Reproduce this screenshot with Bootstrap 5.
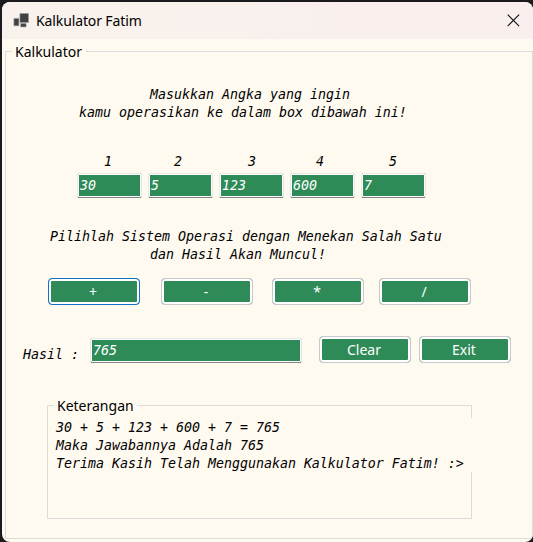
<!DOCTYPE html>
<html lang="id">
<head>
<meta charset="utf-8">
<title>Kalkulator Fatim</title>
<meta name="viewport" content="width=device-width, initial-scale=1">
<link href="https://cdn.jsdelivr.net/npm/bootstrap@5.3.0/dist/css/bootstrap.min.css" rel="stylesheet">
<style>
  body { background: #1b1a1c; height: 542px; overflow: hidden; color: #000; font: 14.3px/20px "Noto Sans", "Open Sans", sans-serif; }
  .app-window { margin: 2px 0 0 2px; width: 531px; height: 540px; background: #fffaf0; border-radius: 8px; overflow: hidden; }
  .titlebar { height: 37px; background: linear-gradient(90deg, #f9f2ec, #f9efee); padding: 0 13px 0 11px; }
  .titlebar span { margin-left: 6px; font-size: 14px; letter-spacing: -.12px; }
  .group { border: 1px solid #dcdcdc; min-width: 0; }
  .group > legend { float: none; width: auto; height: 20px; margin: 0; font: 14px/22px "Noto Sans", "Open Sans", sans-serif; letter-spacing: 0; white-space: nowrap; }
  .group-main { margin: 2px 0 0 3px; width: 528px; height: 498px; }
  .group-main > legend { margin-left: 6px; padding: 0 3px; width: 74px; }
  .mono { font: italic 13.29px/18px "DejaVu Sans Mono", "Liberation Mono", monospace; white-space: pre; }
  .prompt-a { margin: 25px 0 0 73px; }
  .prompt-a .first { padding-left: 71px; }
  .prompt-b { margin: 30px 0 0 44px; }
  .prompt-b .second { padding-left: 100px; }
  .fields { margin: 31px 0 0 71px; gap: 6px; }
  .field { width: 65px; }
  .field label { display: block; height: 20px; padding-left: 27px; }
  .field:nth-child(2) label { padding-left: 26px; }
  .field:nth-child(3) label { padding-left: 29px; }
  .field:nth-child(4) label { padding-left: 26px; }
  .field:nth-child(5) label { padding-left: 28px; }
  .entry.form-control { height: 25px; min-height: 0; padding: 0 0 1px 2px; border: 1px solid #e9e8e6; border-bottom-color: #858182; border-radius: 2px; background: #2e8b57; color: #fff; font: italic 13.29px/18px "DejaVu Sans Mono", monospace; box-shadow: inset 0 0 0 1px #fff; }
  .calc-btn.btn { width: 92px; height: 27px; padding: 0 2px 0 0; border: 1px solid #c9cacc; border-radius: 4px; background: #2e8b57; box-shadow: inset 0 0 0 2px #fff; color: #fff; font-size: 14px; line-height: 26px; letter-spacing: 0; }
  .calc-btn.focused { border-color: #1271c9; }
  .operators { margin: 14px 0 0 42px; }
  .operators .calc-btn:nth-child(2) { margin-left: 21px; }
  .operators .calc-btn:nth-child(3) { margin-left: 19px; }
  .operators .calc-btn:nth-child(4) { margin-left: 15px; }
  .result { margin: 31px 0 0 17px; height: 27px; }
  .result label { width: 67px; padding-top: 10px; }
  .result .entry { width: 212px; margin-top: 2px; }
  .result .clear { margin-left: 17px; }
  .result .exit { margin-left: 8px; }
  .group-note { margin: 32px 0 0 41px; width: 425px; height: 124px; }
  .group-note > legend { margin-left: 6px; padding: 0 3px; width: 83px; }
  .note { margin: 3px -1px 0 6px; padding: 1px 0 0 2px; height: 54px; background: #fffaf0; }
</style>
</head>
<body>
<main class="app-window">
  <header class="titlebar d-flex align-items-center">
    <svg width="17" height="15" viewBox="0 0 17 15"><g fill="#404143" stroke="#9c9a99" stroke-width=".6"><path d="M.9 5.4h5v7.4h-5zM6.9.5h8.6v9H6.9zM7.7 10.6h5.4v3.3H7.7z"/></g></svg>
    <span>Kalkulator Fatim</span>
    <svg class="ms-auto" width="13" height="13" viewBox="0 0 13 13"><path d="M.7.7l11.4 11.4M12.1.7L.7 12.1" stroke="#111" stroke-width="1.15"/></svg>
  </header>
  <fieldset class="group group-main">
    <legend>Kalkulator</legend>
    <div class="mono prompt-a"><div class="first">Masukkan Angka yang ingin</div><div>kamu operasikan ke dalam box dibawah ini!</div></div>
    <div class="fields d-flex">
      <div class="field"><label class="mono" for="n1">1</label><input id="n1" class="form-control entry" value="30"></div>
      <div class="field"><label class="mono" for="n2">2</label><input id="n2" class="form-control entry" value="5"></div>
      <div class="field"><label class="mono" for="n3">3</label><input id="n3" class="form-control entry" value="123"></div>
      <div class="field"><label class="mono" for="n4">4</label><input id="n4" class="form-control entry" value="600"></div>
      <div class="field"><label class="mono" for="n5">5</label><input id="n5" class="form-control entry" value="7"></div>
    </div>
    <div class="mono prompt-b"><div>Pilihlah Sistem Operasi dengan Menekan Salah Satu</div><div class="second">dan Hasil Akan Muncul!</div></div>
    <div class="operators d-flex">
      <button class="btn calc-btn focused">+</button><button class="btn calc-btn">-</button><button class="btn calc-btn">*</button><button class="btn calc-btn">/</button>
    </div>
    <div class="result d-flex">
      <label class="mono" for="sum">Hasil :</label><input id="sum" class="form-control entry" value="765">
      <button class="btn calc-btn clear">Clear</button><button class="btn calc-btn exit">Exit</button>
    </div>
    <fieldset class="group group-note">
      <legend>Keterangan</legend>
      <div class="mono note"><div>30 + 5 + 123 + 600 + 7 = 765</div><div>Maka Jawabannya Adalah 765</div><div>Terima Kasih Telah Menggunakan Kalkulator Fatim! :&gt;</div></div>
    </fieldset>
  </fieldset>
</main>
<script src="https://cdn.jsdelivr.net/npm/bootstrap@5.3.0/dist/js/bootstrap.bundle.min.js"></script>
</body>
</html>
